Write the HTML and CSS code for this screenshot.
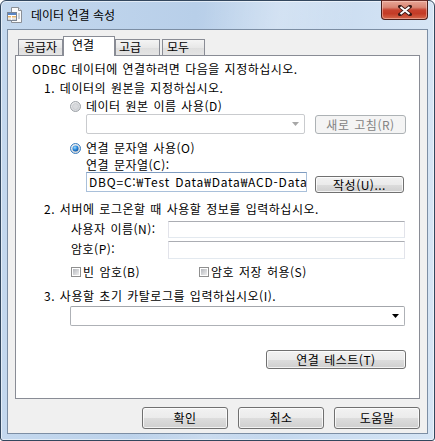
FILE: index.html
```html
<!DOCTYPE html>
<html lang="ko">
<head>
<meta charset="utf-8">
<title>데이터 연결 속성</title>
<link rel="stylesheet" href="styles.css">
</head>
<body>
<div class="window">
  <div class="titlebar">
    <svg class="appicon" width="16" height="16" viewBox="0 0 16 16">
      <path d="M4.5 0.5h7l3 3v12h-10z" fill="#fbfbfb" stroke="#8a8f96"/>
      <path d="M11.5 0.5v3h3" fill="#e6e8eb" stroke="#8a8f96"/>
      <rect x="0.5" y="5.5" width="9" height="8" fill="#fff" stroke="#7b8594"/>
      <rect x="1" y="6" width="8" height="2" fill="#5b86c4"/>
      <rect x="1" y="9" width="3" height="1.5" fill="#e7b46a"/>
      <rect x="5" y="9" width="4" height="1.5" fill="#e7b46a"/>
      <rect x="1" y="11.5" width="3" height="1.5" fill="#d8d8d8"/>
      <rect x="5" y="11.5" width="4" height="1.5" fill="#d8d8d8"/>
      <path d="M11 7h2M11 9h2M11 11h2" stroke="#9aa3ad"/>
    </svg>
    <span class="title">데이터 연결 속성</span>
    <div class="close">
      <svg width="14" height="11" viewBox="0 0 14 11">
        <path d="M2 1.5L12 9.5M12 1.5L2 9.5" stroke="#3c1a16" stroke-width="3.6" stroke-linecap="square"/>
        <path d="M2.5 2L11.5 9M11.5 2L2.5 9" stroke="#ffffff" stroke-width="2"/>
      </svg>
    </div>
  </div>
  <div class="client">
    <div class="tabs">
      <div class="tab t1">공급자</div>
      <div class="tab sel t2">연결</div>
      <div class="tab t3">고급</div>
      <div class="tab t4">모두</div>
    </div>
    <div class="panel">
      <div class="row r1">ODBC 데이터에 연결하려면 다음을 지정하십시오.</div>
      <div class="row r2">1. 데이터의 원본을 지정하십시오.</div>
      <div class="row r3">
        <svg class="radio" width="11" height="11" viewBox="0 0 11 11">
          <defs>
            <radialGradient id="rg1" cx="0.4" cy="0.35" r="0.7">
              <stop offset="0" stop-color="#fafafa"/>
              <stop offset="1" stop-color="#cfd2d6"/>
            </radialGradient>
          </defs>
          <circle cx="5.5" cy="5.5" r="5" fill="url(#rg1)" stroke="#9ea3a8"/>
          <circle cx="5.5" cy="5.5" r="3" fill="#d9dbde" stroke="#c5c8cc" stroke-width="0.8"/>
        </svg>
        <span>데이터 원본 이름 사용(D)</span>
      </div>
      <div class="row r4">
        <div class="combo disabled">
          <svg class="arrow" width="7" height="4" viewBox="0 0 7 4"><path d="M0 0h7L3.5 4z" fill="#a7a7a7"/></svg>
        </div>
        <div class="btn disabled refresh">새로 고침(R)</div>
      </div>
      <div class="row r5">
        <svg class="radio" width="11" height="11" viewBox="0 0 11 11">
          <defs>
            <radialGradient id="rg2" cx="0.4" cy="0.35" r="0.7">
              <stop offset="0" stop-color="#fafafa"/>
              <stop offset="1" stop-color="#cfd2d6"/>
            </radialGradient>
            <radialGradient id="rb" cx="0.4" cy="0.35" r="0.7">
              <stop offset="0" stop-color="#9fdcff"/>
              <stop offset="0.5" stop-color="#2f8ee0"/>
              <stop offset="1" stop-color="#0d4f9c"/>
            </radialGradient>
          </defs>
          <circle cx="5.5" cy="5.5" r="5" fill="url(#rg2)" stroke="#3a7fc0"/>
          <circle cx="5.5" cy="5.5" r="3" fill="url(#rb)"/>
        </svg>
        <span>연결 문자열 사용(O)</span>
      </div>
      <div class="row r6">연결 문자열(C):</div>
      <div class="row r7">
        <div class="input connstr">DBQ=C:₩Test Data₩Data₩ACD-Data</div>
        <div class="btn build">작성(U)...</div>
      </div>
      <div class="row r8">2. 서버에 로그온할 때 사용할 정보를 입력하십시오.</div>
      <div class="row r9">
        <span class="label">사용자 이름(N):</span>
        <div class="input field"></div>
      </div>
      <div class="row r10">
        <span class="label">암호(P):</span>
        <div class="input field"></div>
      </div>
      <div class="row r11">
        <span class="check"></span><span class="cktext first">빈 암호(B)</span>
        <span class="check"></span><span class="cktext">암호 저장 허용(S)</span>
      </div>
      <div class="row r12">3. 사용할 초기 카탈로그를 입력하십시오(I).</div>
      <div class="row r13">
        <div class="combo catalog">
          <svg class="arrow" width="7" height="4" viewBox="0 0 7 4"><path d="M0 0h7L3.5 4z" fill="#000"/></svg>
        </div>
      </div>
      <div class="row r14">
        <div class="btn test">연결 테스트(T)</div>
      </div>
    </div>
    <div class="buttons">
      <div class="btn dlg">확인</div>
      <div class="btn dlg">취소</div>
      <div class="btn dlg">도움말</div>
    </div>
  </div>
</div>
</body>
</html>
```

FILE: styles.css
```css
* { box-sizing: border-box; }
html, body { margin: 0; padding: 0; background: #ffffff; }
body {
  font-family: "Noto Sans CJK KR", "Noto Sans", sans-serif;
  font-size: 12px;
  color: #000;
}

.window {
  width: 435px;
  height: 441px;
  border: 1px solid #33475e;
  border-radius: 6px 6px 3px 3px;
  background:
    linear-gradient(100deg, rgba(255,255,255,0) 40%, rgba(255,255,255,0.25) 55%, rgba(255,255,255,0) 70%),
    linear-gradient(to right, #c4d8ee 0%, #b8cfe9 45%, #c8dbf0 70%, #d6e5f5 100%);
  padding: 0 6px 6px 6px;
  display: flex;
  flex-direction: column;
  box-shadow: inset 0 0 0 1px rgba(255,255,255,0.55);
}

.titlebar {
  height: 28px;
  display: flex;
  align-items: center;
}
.appicon { flex: none; display: block; }
.title {
  margin-left: 8px;
  line-height: 16px;
  color: #000;
}
.close {
  margin-left: auto;
  align-self: flex-start;
  margin-top: -1px;
  width: 47px;
  height: 20px;
  border: 1px solid #4a1e1a;
  border-top-color: #6a2c26;
  border-radius: 0 0 4px 4px;
  background: linear-gradient(#e8a596 0%, #d98674 35%, #c7422f 50%, #c43b26 70%, #d5684c 100%);
  box-shadow: inset 0 0 0 1px rgba(255,220,210,0.45);
  display: flex;
  align-items: center;
  justify-content: center;
}

.client {
  flex: 1;
  background: #f0f0f0;
  border: 1px solid #7c8ea4;
  padding: 6px 7px 4px 7px;
  display: flex;
  flex-direction: column;
}

.tabs {
  height: 20px;
  margin-bottom: -1px;
  display: flex;
  align-items: flex-end;
  padding-left: 3px;
  position: relative;
  z-index: 1;
}
.tab {
  height: 16px;
  margin-bottom: 1px;
  border: 1px solid #898c95;
  border-bottom: none;
  background: linear-gradient(#f4f4f4, #e8e8e8 50%, #dedede 51%, #e4e4e4);
  line-height: 14px;
  padding-top: 0px;
  white-space: nowrap;
}
.tab.sel {
  height: 20px;
  margin-bottom: 0;
  background: #ffffff;
  padding-top: 1px;
}
.t1 { width: 45px; padding-left: 5px; }
.t2 { width: 52px; padding-left: 8px; }
.t3 { width: 45px; padding-left: 3px; }
.t4 { width: 43px; padding-left: 4px; margin-left: 2px; }

.panel {
  height: 344px;
  background: #ffffff;
  border: 1px solid #898c95;
  display: flex;
  flex-direction: column;
  letter-spacing: 0.5px;
  word-spacing: 1px;
}

.row {
  display: flex;
  align-items: center;
  line-height: 16px;
  white-space: nowrap;
}
.r1 { margin-top: 5px; padding-left: 16px; }
.r2 { margin-top: 3px; padding-left: 28px; }
.r3 { margin-top: 2px; padding-left: 54px; }
.radio { flex: none; display: block; margin-right: 5px; }
.r4 { margin-top: 0; padding-left: 70px; align-items: flex-start; height: 20px; }
.r5 { margin-top: 6px; padding-left: 54px; }
.r6 { margin-top: 2px; padding-left: 70px; line-height: 14px; }
.r7 { margin-top: 0; padding-left: 70px; align-items: flex-start; height: 21px; }
.r8 { margin-top: 8px; padding-left: 28px; }
.r9 { margin-top: 4px; padding-left: 55px; align-items: flex-start; }
.r10 { margin-top: 3px; padding-left: 55px; align-items: flex-start; }
.r11 { margin-top: 5px; padding-left: 55px; }
.r12 { margin-top: 8px; padding-left: 28px; }
.r13 { margin-top: 2px; padding-left: 54px; }
.r14 { margin-top: 24px; justify-content: flex-end; padding-right: 13px; }

.combo {
  position: relative;
  height: 20px;
  background: #fff;
  border: 1px solid #c9cbce;
  border-radius: 2px;
}
.combo.disabled { width: 219px; }
.combo.catalog { width: 335px; border-color: #aeb1b6; border-top-color: #a3a6ab; }
.combo .arrow {
  position: absolute;
  right: 5px;
  top: 7px;
  display: block;
}

.btn {
  display: flex;
  align-items: center;
  justify-content: center;
  border: 1px solid #707070;
  border-radius: 3px;
  background: linear-gradient(#f2f2f2 0%, #ebebeb 50%, #dddddd 51%, #cfcfcf 100%);
  box-shadow: inset 0 0 0 1px rgba(255,255,255,0.75);
  line-height: 14px;
  white-space: nowrap;
}
.btn.disabled {
  border-color: #adb2b5;
  background: #f4f4f4;
  color: #838383;
  box-shadow: none;
}
.refresh { width: 91px; height: 19px; margin-left: 10px; margin-top: 1px; }
.build { width: 89px; height: 17px; margin-left: 8px; margin-top: 4px; }
.test { width: 140px; height: 19px; }
.dlg { width: 86px; height: 22px; }
.buttons .btn { letter-spacing: 0.5px; }

.input {
  background: #fff;
  border: 1px solid #e2e3ea;
  border-top-color: #abadb3;
  border-bottom-color: #e3e9ef;
}
.connstr {
  width: 221px;
  height: 20px;
  line-height: 16px;
  padding: 1px 0 0 2px;
  overflow: hidden;
  letter-spacing: 0.8px;
  border-color: #a9c0da;
  border-top-color: #7f9cc0;
}
.label { width: 97px; line-height: 15px; flex: none; }
.field { width: 237px; height: 17px; }
.r10 .field { height: 18px; }

.check {
  flex: none;
  width: 10px;
  height: 10px;
  border: 1px solid #8f8f8f;
  background: #fff;
  position: relative;
  margin-right: 2px;
}
.check::after {
  content: "";
  position: absolute;
  left: 1px; top: 1px; right: 1px; bottom: 1px;
  background: linear-gradient(135deg, #b5b8bd, #eeeeee);
}
.cktext.first { width: 116px; }

.buttons {
  margin-top: 8px;
  display: flex;
  justify-content: flex-end;
  gap: 10px;
}
```
